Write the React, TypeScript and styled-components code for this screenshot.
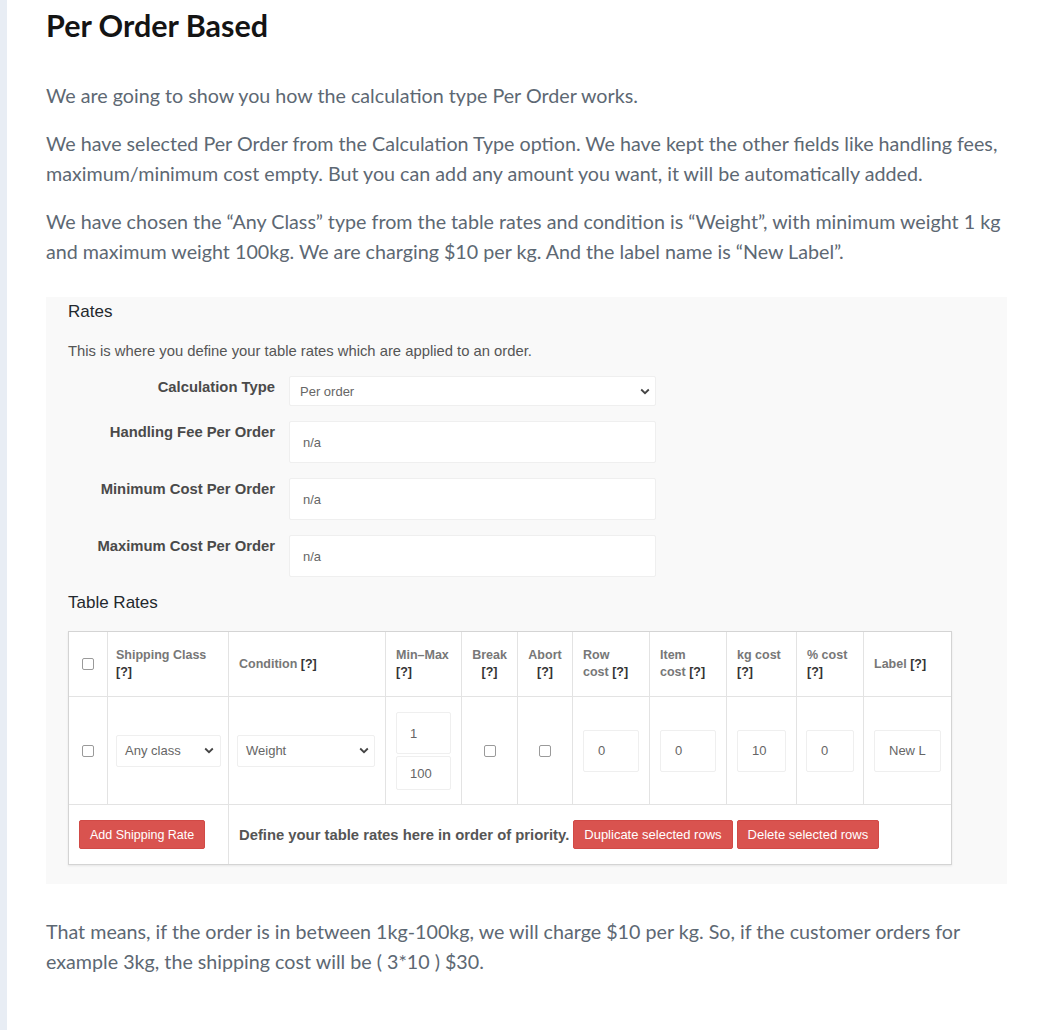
import React from "react";
import styled, { createGlobalStyle } from "styled-components";

const GlobalStyle = createGlobalStyle`
  html, body { margin: 0; padding: 0; background: #fff; }
  body {
    background: linear-gradient(to right, #e8edf4 0, #e8edf4 7px, #ffffff 7px);
  }
  * { box-sizing: border-box; }
`;

const Page = styled.div`
  padding: 8px 42px 40px 46px;
  font-family: Lato, "Open Sans", sans-serif;
`;

const Title = styled.h2`
  margin: 0 0 39px;
  font-family: Lato, sans-serif;
  font-weight: 700;
  font-size: 30.5px;
  line-height: 34px;
  color: #141414;
`;

const Para = styled.p<{ $mb?: number }>`
  margin: 0 0 ${(p) => (p.$mb ?? 18)}px;
  font-family: Lato, sans-serif;
  font-size: 19.7px;
  line-height: 30px;
  color: #5d6873;
`;

const Shot = styled.div`
  background: #f9f9f9;
  padding: 4px 22px 19px;
  margin-bottom: 33px;
  font-family: "Liberation Sans", Arial, sans-serif;
  color: #444;
`;

const SectionHead = styled.h3`
  margin: 0;
  font-size: 17px;
  font-weight: 400;
  line-height: 22px;
  color: #23282d;
`;

const Desc = styled.p`
  margin: 18px 0 15px;
  font-size: 14.8px;
  line-height: 20px;
  color: #555;
`;

const FormGrid = styled.div`
  display: grid;
  grid-template-columns: 207px 367px;
  column-gap: 14px;
  row-gap: 15px;
  margin-bottom: 15px;
`;

const FieldLabel = styled.div`
  text-align: right;
  font-weight: 700;
  font-size: 14.8px;
  line-height: 20px;
  padding-top: 1px;
  color: #4a4a4a;
`;

const Box = styled.div<{ $h: number; $pl?: number; $pr?: number }>`
  height: ${(p) => p.$h}px;
  background: #fff;
  border: 1px solid #efefef;
  border-radius: 2px;
  display: flex;
  align-items: center;
  justify-content: space-between;
  padding: 0 ${(p) => p.$pr ?? 10}px 0 ${(p) => p.$pl ?? 13}px;
  font-size: 13px;
  color: #666;
  width: 100%;
`;

const Chevron = () => (
  <svg width="10" height="7" viewBox="0 0 10 7">
    <path d="M1.2 1.5 5 5.2 8.8 1.5" fill="none" stroke="#444" strokeWidth="1.8" />
  </svg>
);

const Table = styled.div`
  background: #fff;
  border: 1px solid #d4d4d4;
  box-shadow: 0 1px 2px rgba(0, 0, 0, 0.08);
  width: 884px;
`;

const cols = "39px 121px 157px 76px 56px 55px 77px 77px 70px 67px 87px";

const Row = styled.div<{ $h: number }>`
  display: grid;
  grid-template-columns: ${cols};
  min-height: ${(p) => p.$h}px;
  border-bottom: 1px solid #e3e3e3;
`;

const Cell = styled.div<{ $center?: boolean; $pad?: string; $last?: boolean }>`
  display: flex;
  flex-direction: column;
  justify-content: center;
  align-items: ${(p) => (p.$center ? "center" : "stretch")};
  text-align: ${(p) => (p.$center ? "center" : "left")};
  padding: ${(p) => p.$pad ?? "0 10px"};
  border-right: ${(p) => (p.$last ? "none" : "1px solid #e3e3e3")};
`;

const HeadText = styled.div`
  font-weight: 700;
  font-size: 12.5px;
  line-height: 17px;
  color: #777;
  b { color: #333; }
`;

const Check = styled.span`
  display: inline-block;
  width: 12px;
  height: 12px;
  border: 1px solid #9a9a9a;
  border-radius: 2px;
  background: #fff;
`;

const Foot = styled.div`
  display: grid;
  grid-template-columns: 160px 1fr;
  height: 59px;
`;

const FootCell = styled.div<{ $border?: boolean }>`
  display: flex;
  align-items: center;
  gap: 4px;
  padding: 0 10px;
  border-right: ${(p) => (p.$border ? "1px solid #e3e3e3" : "none")};
`;

const RedButton = styled.button<{ $fs?: number }>`
  height: 29px;
  padding: 0 10px;
  background: #d9534f;
  color: #fff;
  border: 1px solid #d14a46;
  border-radius: 2px;
  font-family: "Liberation Sans", Arial, sans-serif;
  font-size: ${(p) => p.$fs ?? 12.5}px;
  white-space: nowrap;
`;

const FootText = styled.span`
  font-weight: 700;
  font-size: 14.8px;
  color: #555;
  white-space: nowrap;
`;

const Stack = styled.div`
  display: flex;
  flex-direction: column;
  gap: 2px;
  padding: 15px 0 14px;
`;

const Spacer = styled.div`
  height: 17px;
`;

export default function App() {
  return (
    <>
      <GlobalStyle />
      <Page>
        <Title>Per Order Based</Title>
        <Para>We are going to show you how the calculation type Per Order works.</Para>
        <Para>
          We have selected Per Order from the Calculation Type option. We have kept the other fields like handling fees,
          maximum/minimum cost empty. But you can add any amount you want, it will be automatically added.
        </Para>
        <Para $mb={30}>
          We have chosen the “Any Class” type from the table rates and condition is “Weight”, with minimum weight 1 kg and
          maximum weight 100kg. We are charging $10 per kg. And the label name is “New Label”.
        </Para>

        <Shot>
          <SectionHead>Rates</SectionHead>
          <Desc>This is where you define your table rates which are applied to an order.</Desc>
          <FormGrid>
            <FieldLabel>Calculation Type</FieldLabel>
            <Box $h={30} $pl={10} $pr={5}>
              Per order <Chevron />
            </Box>
            <FieldLabel>Handling Fee Per Order</FieldLabel>
            <Box $h={42}>n/a</Box>
            <FieldLabel>Minimum Cost Per Order</FieldLabel>
            <Box $h={42}>n/a</Box>
            <FieldLabel>Maximum Cost Per Order</FieldLabel>
            <Box $h={42}>n/a</Box>
          </FormGrid>

          <SectionHead>Table Rates</SectionHead>
          <Spacer />
          <Table>
            <Row $h={65}>
              <Cell $center $pad="0">
                <Check />
              </Cell>
              <Cell $pad="0 8px">
                <HeadText>
                  Shipping Class
                  <br />
                  <b>[?]</b>
                </HeadText>
              </Cell>
              <Cell>
                <HeadText>
                  Condition <b>[?]</b>
                </HeadText>
              </Cell>
              <Cell>
                <HeadText>
                  Min–Max
                  <br />
                  <b>[?]</b>
                </HeadText>
              </Cell>
              <Cell $center $pad="0">
                <HeadText>
                  Break
                  <br />
                  <b>[?]</b>
                </HeadText>
              </Cell>
              <Cell $center $pad="0">
                <HeadText>
                  Abort
                  <br />
                  <b>[?]</b>
                </HeadText>
              </Cell>
              <Cell>
                <HeadText>
                  Row
                  <br />
                  cost <b>[?]</b>
                </HeadText>
              </Cell>
              <Cell>
                <HeadText>
                  Item
                  <br />
                  cost <b>[?]</b>
                </HeadText>
              </Cell>
              <Cell>
                <HeadText>
                  kg cost
                  <br />
                  <b>[?]</b>
                </HeadText>
              </Cell>
              <Cell>
                <HeadText>
                  % cost
                  <br />
                  <b>[?]</b>
                </HeadText>
              </Cell>
              <Cell $last>
                <HeadText>
                  Label <b>[?]</b>
                </HeadText>
              </Cell>
            </Row>
            <Row $h={108}>
              <Cell $center $pad="0">
                <Check />
              </Cell>
              <Cell $pad="0 7px 0 8px">
                <Box $h={32} $pl={8} $pr={6}>
                  Any class <Chevron />
                </Box>
              </Cell>
              <Cell $pad="0 10px 0 8px">
                <Box $h={32} $pl={8} $pr={5}>
                  Weight <Chevron />
                </Box>
              </Cell>
              <Cell>
                <Stack>
                  <Box $h={42} $pl={13}>1</Box>
                  <Box $h={34} $pl={13}>100</Box>
                </Stack>
              </Cell>
              <Cell $center $pad="0">
                <Check />
              </Cell>
              <Cell $center $pad="0">
                <Check />
              </Cell>
              <Cell>
                <Box $h={42} $pl={14}>0</Box>
              </Cell>
              <Cell>
                <Box $h={42} $pl={14}>0</Box>
              </Cell>
              <Cell>
                <Box $h={42} $pl={14}>10</Box>
              </Cell>
              <Cell $pad="0 9px 0 9px">
                <Box $h={42} $pl={14}>0</Box>
              </Cell>
              <Cell $last $pad="0 10px 0 10px">
                <Box $h={42} $pl={14}>New L</Box>
              </Cell>
            </Row>
            <Foot>
              <FootCell $border>
                <RedButton>Add Shipping Rate</RedButton>
              </FootCell>
              <FootCell>
                <FootText>Define your table rates here in order of priority.</FootText>
                <RedButton $fs={13}>Duplicate selected rows</RedButton>
                <RedButton $fs={13}>Delete selected rows</RedButton>
              </FootCell>
            </Foot>
          </Table>
        </Shot>

        <Para>
          That means, if the order is in between 1kg-100kg, we will charge $10 per kg. So, if the customer orders for
          example 3kg, the shipping cost will be ( 3*10 ) $30.
        </Para>
      </Page>
    </>
  );
}
